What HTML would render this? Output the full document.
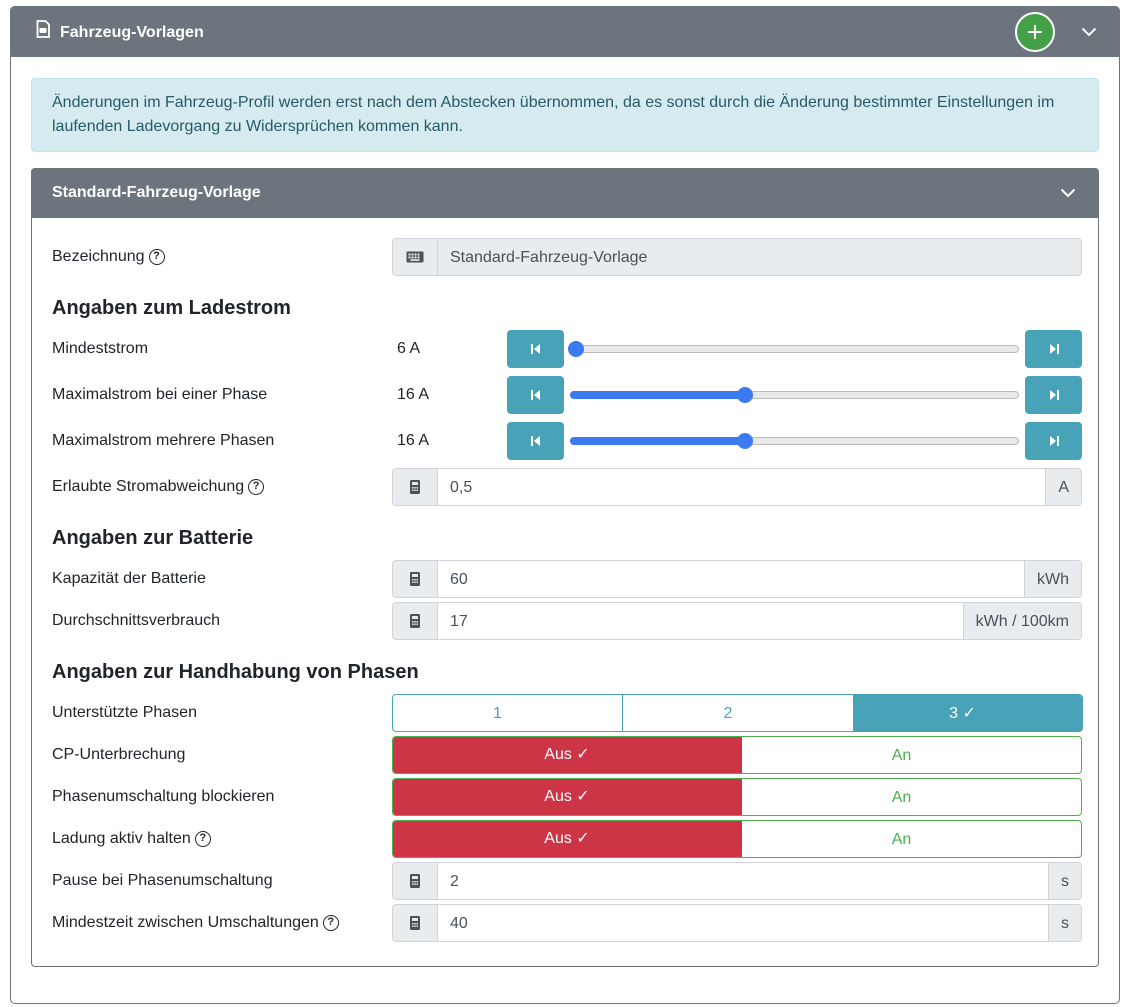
<!DOCTYPE html>
<html><head><meta charset="utf-8"><style>
*{box-sizing:border-box;margin:0;padding:0}
body{width:1124px;height:1007px;background:#fff;font-family:"Liberation Sans",Arial,sans-serif;color:#212529;position:relative;overflow:hidden;font-size:16px}
.a{position:absolute}
.lbl{position:absolute;left:52px;font-size:16px;line-height:20px}
.h{position:absolute;left:52px;font-size:20px;font-weight:bold;line-height:24px}
.ig{position:absolute;left:392px;width:690px;height:38px;border:1px solid #ced4da;border-radius:4px;background:#fff;display:flex;overflow:hidden}
.ig .pre{width:45px;background:#e9ecef;border-right:1px solid #ced4da;display:flex;align-items:center;justify-content:center}
.ig .val{flex:1;padding-left:12px;line-height:37px;color:#495057}
.ig .suf{background:#e9ecef;border-left:1px solid #ced4da;padding:0 12px;line-height:37px;color:#495057}
.btn{position:absolute;width:57px;height:38px;background:#48a2b8;border-radius:4px;display:flex;align-items:center;justify-content:center}
.track{position:absolute;left:570px;width:449px;height:8px;border-radius:4px;background:#e9e9e9;border:1px solid #bbb}
.fill{position:absolute;left:570px;height:8px;border-radius:4px;background:#3b7af0}
.thumb{position:absolute;width:16px;height:16px;border-radius:50%;background:#3b7af0}
.q{display:inline-block;width:16px;height:16px;border:1.6px solid #212529;border-radius:50%;font-size:11px;font-weight:bold;text-align:center;line-height:13px;vertical-align:top;margin-left:4px;margin-top:2px}
.tog{position:absolute;left:392px;width:690px;height:38px;display:flex;border-radius:4px;overflow:hidden;border:1px solid #4caf50}
.tog .off{width:350px;background:#cd3445;color:#fff;text-align:center;line-height:37px;margin:-1px 0 -1px -1px}
.tog .on{flex:1;text-align:center;line-height:37px;color:#4caf50;padding-right:20px}
</style></head><body>
<svg width="0" height="0" style="position:absolute"><defs>
<g id="calc"><rect x="0" y="0" width="10" height="14" rx="1.5" fill="#495057"/><rect x="2" y="2" width="6" height="3" fill="#e9ecef"/><g fill="#e9ecef"><rect x="2" y="7" width="1.5" height="1.5"/><rect x="4.25" y="7" width="1.5" height="1.5"/><rect x="6.5" y="7" width="1.5" height="1.5"/><rect x="2" y="9.5" width="1.5" height="1.5"/><rect x="4.25" y="9.5" width="1.5" height="1.5"/><rect x="6.5" y="9.5" width="1.5" height="1.5"/></g></g>
</defs></svg>

<div class="a" style="left:10px;top:6px;width:1110px;height:998px;border:1px solid #6c757d;border-radius:5px"></div>
<div class="a" style="left:10px;top:6px;width:1110px;height:51px;background:#6c757d;border-radius:5px 5px 0 0"></div>
<svg class="a" style="left:36px;top:20px" width="14" height="18" viewBox="0 0 14 18"><path d="M1.5 1h8l3.5 3.5V17h-11.5z" fill="none" stroke="#fff" stroke-width="1.8"/><rect x="3.5" y="8" width="7" height="5" rx="1" fill="#fff"/></svg>
<div class="a" style="left:60px;top:24px;color:#fff;font-weight:bold;font-size:16px">Fahrzeug-Vorlagen</div>
<div class="a" style="left:1015px;top:12px;width:40px;height:40px;border-radius:50%;background:#43a047;border:2px solid #fff"></div>
<svg class="a" style="left:1026px;top:23px" width="18" height="18"><path d="M9 2v14M2 9h14" stroke="#fff" stroke-width="2"/></svg>
<svg class="a" style="left:1081px;top:27px" width="16" height="10"><path d="M1.5 1.5l6.5 6.5 6.5-6.5" fill="none" stroke="#fff" stroke-width="2"/></svg>

<div class="a" style="left:31px;top:78px;width:1068px;height:74px;background:#d5ebf0;border:1px solid #bee5eb;border-radius:4px;padding:12px 20px;font-size:16px;line-height:24px;color:#275a66">Änderungen im Fahrzeug-Profil werden erst nach dem Abstecken übernommen, da es sonst durch die Änderung bestimmter Einstellungen im laufenden Ladevorgang zu Widersprüchen kommen kann.</div>

<div class="a" style="left:31px;top:168px;width:1068px;height:799px;border:1px solid #6c757d;border-radius:4px"></div>
<div class="a" style="left:31px;top:168px;width:1068px;height:50px;background:#6c757d;border-radius:4px 4px 0 0"></div>
<div class="a" style="left:52px;top:184px;color:#fff;font-weight:bold;font-size:16px">Standard-Fahrzeug-Vorlage</div>
<svg class="a" style="left:1060px;top:188px" width="16" height="10"><path d="M1.5 1.5l6.5 6.5 6.5-6.5" fill="none" stroke="#fff" stroke-width="2"/></svg>

<div class="lbl" style="top:247px">Bezeichnung<span class="q">?</span></div>
<div class="ig" style="top:238px;background:#e9ecef"><div class="pre"><svg width="18" height="12"><rect x="0.5" y="0.5" width="17" height="11" rx="1" fill="#495057"/><g fill="#e9ecef"><rect x="2.5" y="2.5" width="2" height="2"/><rect x="5.5" y="2.5" width="2" height="2"/><rect x="8.5" y="2.5" width="2" height="2"/><rect x="11.5" y="2.5" width="2" height="2"/><rect x="2.5" y="5.5" width="2" height="2"/><rect x="5.5" y="5.5" width="2" height="2"/><rect x="8.5" y="5.5" width="2" height="2"/><rect x="11.5" y="5.5" width="2" height="2"/><rect x="4.5" y="8.3" width="9" height="1.6"/></g></svg></div><div class="val">Standard-Fahrzeug-Vorlage</div></div>

<div class="h" style="top:296px">Angaben zum Ladestrom</div>

<div class="lbl" style="top:339px">Mindeststrom</div>
<div class="lbl" style="top:339px;left:397px">6 A</div>
<div class="lbl" style="top:385px">Maximalstrom bei einer Phase</div>
<div class="lbl" style="top:385px;left:397px">16 A</div>
<div class="lbl" style="top:431px">Maximalstrom mehrere Phasen</div>
<div class="lbl" style="top:431px;left:397px">16 A</div>

<div class="btn" style="left:507px;top:330px"><svg width="12" height="12"><path d="M2 1v10" stroke="#fff" stroke-width="2"/><path d="M10 1v10L4 6z" fill="#fff"/></svg></div>
<div class="btn" style="left:1025px;top:330px"><svg width="12" height="12"><path d="M10 1v10" stroke="#fff" stroke-width="2"/><path d="M2 1v10L8 6z" fill="#fff"/></svg></div>
<div class="track" style="top:345px"></div><div class="thumb" style="left:568px;top:341px"></div>

<div class="btn" style="left:507px;top:376px"><svg width="12" height="12"><path d="M2 1v10" stroke="#fff" stroke-width="2"/><path d="M10 1v10L4 6z" fill="#fff"/></svg></div>
<div class="btn" style="left:1025px;top:376px"><svg width="12" height="12"><path d="M10 1v10" stroke="#fff" stroke-width="2"/><path d="M2 1v10L8 6z" fill="#fff"/></svg></div>
<div class="track" style="top:391px"></div><div class="fill" style="top:391px;width:176px"></div><div class="thumb" style="left:737px;top:387px"></div>

<div class="btn" style="left:507px;top:422px"><svg width="12" height="12"><path d="M2 1v10" stroke="#fff" stroke-width="2"/><path d="M10 1v10L4 6z" fill="#fff"/></svg></div>
<div class="btn" style="left:1025px;top:422px"><svg width="12" height="12"><path d="M10 1v10" stroke="#fff" stroke-width="2"/><path d="M2 1v10L8 6z" fill="#fff"/></svg></div>
<div class="track" style="top:437px"></div><div class="fill" style="top:437px;width:176px"></div><div class="thumb" style="left:737px;top:433px"></div>

<div class="lbl" style="top:477px">Erlaubte Stromabweichung<span class="q">?</span></div>
<div class="ig" style="top:468px"><div class="pre"><svg width="10" height="14"><use href="#calc"/></svg></div><div class="val">0,5</div><div class="suf">A</div></div>

<div class="h" style="top:526px">Angaben zur Batterie</div>
<div class="lbl" style="top:569px">Kapazität der Batterie</div>
<div class="ig" style="top:560px"><div class="pre"><svg width="10" height="14"><use href="#calc"/></svg></div><div class="val">60</div><div class="suf">kWh</div></div>
<div class="lbl" style="top:611px">Durchschnittsverbrauch</div>
<div class="ig" style="top:602px"><div class="pre"><svg width="10" height="14"><use href="#calc"/></svg></div><div class="val">17</div><div class="suf">kWh / 100km</div></div>

<div class="h" style="top:660px">Angaben zur Handhabung von Phasen</div>
<div class="lbl" style="top:703px">Unterstützte Phasen</div>
<div class="a" style="left:392px;top:694px;width:691px;height:38px;border:1px solid #48a2b8;border-radius:4px;display:flex;overflow:hidden;color:#48a2b8">
<div style="width:230px;text-align:center;line-height:37px;border-right:1px solid #48a2b8;padding-right:20px">1</div>
<div style="width:230px;text-align:center;line-height:37px;padding-right:20px">2</div>
<div style="flex:1;text-align:center;line-height:37px;background:#48a2b8;color:#fff;padding-right:10px">3 ✓</div></div>

<div class="lbl" style="top:745px">CP-Unterbrechung</div>
<div class="tog" style="top:736px"><div class="off">Aus ✓</div><div class="on">An</div></div>
<div class="lbl" style="top:787px">Phasenumschaltung blockieren</div>
<div class="tog" style="top:778px"><div class="off">Aus ✓</div><div class="on">An</div></div>
<div class="lbl" style="top:829px">Ladung aktiv halten<span class="q">?</span></div>
<div class="tog" style="top:820px"><div class="off">Aus ✓</div><div class="on">An</div></div>

<div class="lbl" style="top:871px">Pause bei Phasenumschaltung</div>
<div class="ig" style="top:862px"><div class="pre"><svg width="10" height="14"><use href="#calc"/></svg></div><div class="val">2</div><div class="suf">s</div></div>
<div class="lbl" style="top:913px">Mindestzeit zwischen Umschaltungen<span class="q">?</span></div>
<div class="ig" style="top:904px"><div class="pre"><svg width="10" height="14"><use href="#calc"/></svg></div><div class="val">40</div><div class="suf">s</div></div>
</body></html>
